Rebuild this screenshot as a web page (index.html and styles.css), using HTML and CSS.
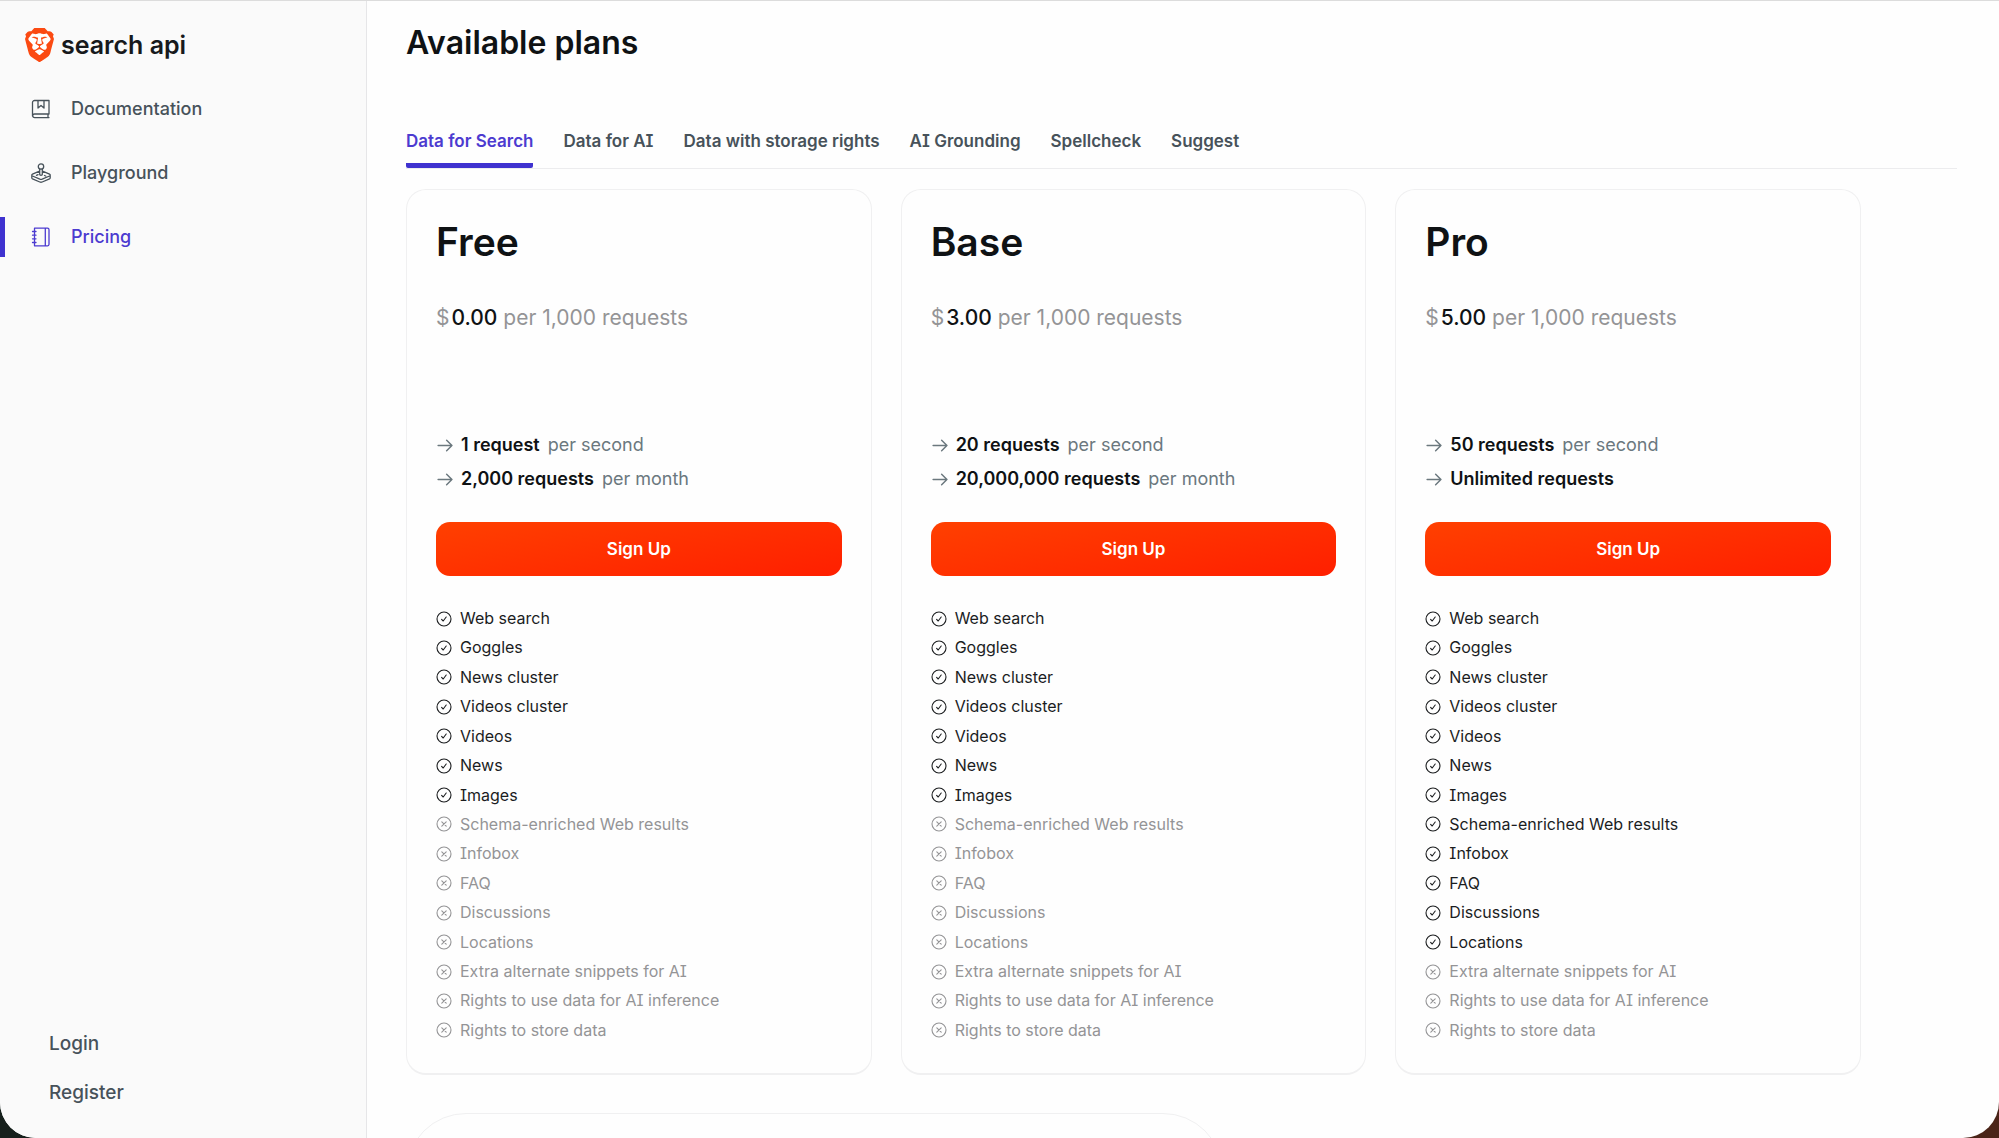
FILE: index.html
```html
<!DOCTYPE html>
<html lang="en">
<head>
    <meta charset="UTF-8">
    <meta name="viewport" content="width=device-width, initial-scale=1.0">
    <title>Search API - Available plans</title>
    <link rel="stylesheet" href="styles.css">
</head>
<body>
    <svg class="sprite" aria-hidden="true">
        <symbol id="check" viewBox="0 0 16 16">
            <circle cx="8" cy="8" r="7" />
            <path d="M5.6 8.4l1.6 1.6 3-4" />
        </symbol>
        <symbol id="cross" viewBox="0 0 16 16">
            <circle cx="8" cy="8" r="7" />
            <path d="M5.8 5.8l4.4 4.4M10.2 5.8l-4.4 4.4" />
        </symbol>
        <symbol id="arrow" viewBox="0 0 16 16">
            <path d="M2 8h13M10 3l5 5-5 5" />
        </symbol>
    </svg>

    <div class="window">
        <aside class="sidebar">
            <a href="#" class="logo">
                <svg class="logo-mark" viewBox="1.9 0 20.2 24" aria-hidden="true">
                    <path fill="#fff" d="M6 3h12l3 5-4 9-5 4-5-4-4-9z" />
                    <path fill="#fb4a12" d="M15.68 0l2.096 2.38s1.84-.512 2.709.358c.868.87 1.584 1.638 1.584 1.638l-.562 1.381.715 2.047s-2.104 7.98-2.35 8.955c-.486 1.919-.818 2.66-2.198 3.633-1.38.972-3.884 2.66-4.293 2.916-.409.256-.92.692-1.38.692-.46 0-.97-.436-1.38-.692a185.796 185.796 0 01-4.293-2.916c-1.38-.973-1.712-1.714-2.197-3.633-.247-.975-2.351-8.955-2.351-8.955l.715-2.047-.562-1.381s.716-.768 1.585-1.638c.868-.87 2.708-.358 2.708-.358L8.321 0h7.36zm-3.679 14.936c-.14 0-1.038.317-1.758.69-.72.373-1.242.637-1.409.742-.167.104-.065.301.087.409.152.107 2.194 1.69 2.393 1.866.198.175.489.464.687.464.198 0 .49-.29.688-.464.198-.175 2.24-1.759 2.392-1.866.152-.108.254-.305.087-.41-.167-.104-.689-.368-1.41-.741-.72-.373-1.617-.69-1.757-.69zm0-11.278s-.409.001-1.022.206-1.278.46-1.584.46c-.307 0-2.581-.434-2.581-.434S4.119 7.152 4.119 7.849c0 .697.339.881.68 1.243l2.02 2.149c.192.203.59.511.356 1.066-.235.555-.58 1.26-.196 1.977.384.716 1.042 1.194 1.464 1.115.421-.08 1.412-.598 1.776-.834.364-.237 1.518-1.19 1.518-1.554 0-.365-1.193-1.02-1.413-1.168-.22-.15-1.226-.725-1.247-.95-.02-.227-.012-.293.284-.851.297-.559.831-1.304.742-1.8-.089-.495-.95-.753-1.565-.986-.615-.232-1.799-.671-1.947-.74-.148-.068-.11-.133.339-.175.448-.043 1.719-.212 2.292-.052.573.16 1.552.403 1.632.532.079.13.149.134.067.579-.081.445-.5 2.581-.541 2.96-.04.38-.12.63.288.724.409.094 1.097.256 1.333.256s.924-.162 1.333-.256c.408-.093.329-.344.288-.723-.04-.38-.46-2.516-.541-2.961-.082-.445-.012-.45.067-.579.08-.129 1.059-.372 1.632-.532.573-.16 1.845.009 2.292.052.449.042.487.107.339.175-.148.069-1.332.508-1.947.74-.615.233-1.476.49-1.565.986-.09.496.445 1.241.742 1.8.297.558.304.624.284.85-.02.226-1.026.802-1.247.95-.22.15-1.413.804-1.413 1.169 0 .364 1.154 1.317 1.518 1.554.364.236 1.355.755 1.776.834.422.079 1.08-.4 1.464-1.115.384-.716.039-1.422-.195-1.977-.235-.555.163-.863.355-1.066l2.02-2.149c.341-.362.68-.546.68-1.243 0-.697-2.695-3.96-2.695-3.96s-2.274.436-2.58.436c-.307 0-.972-.256-1.585-.461-.613-.205-1.022-.206-1.022-.206z" />
                </svg>
                <span>search api</span>
            </a>
            <nav class="menu">
                <a href="#">
                    <svg class="menu-icon" viewBox="0 0 20 20" aria-hidden="true">
                        <path d="M18 15V1.500H3.500a2 2 0 0 0-2 2V17M18 15H3.500a1.800 1.800 0 0 0 0 3.600H18M17 15v3.600M7 1.500v7.500l3-2.500 3 2.500V1.500" />
                    </svg>
                    Documentation
                </a>
                <a href="#">
                    <svg class="menu-icon" viewBox="0 0 20 20" aria-hidden="true">
                        <circle cx="10" cy="3.500" r="2.700" />
                        <path d="M8.700 6v5.500c0 1 2.600 1 2.600 0V6M8.500 8.200L1.500 11.200c-1 .5-1 1.300 0 1.800l7.300 3.200c.8.300 1.600.3 2.400 0l7.300-3.200c1-.5 1-1.300 0-1.800l-7-3M.8 12.500v2.300c0 .5.300.8.700 1l7.300 3.200c.8.300 1.600.3 2.400 0l7.300-3.200c.4-.2.700-.5.700-1v-2.300M5.500 12.300l1.500-.7M13.500 12.500l1.200.5" />
                    </svg>
                    Playground
                </a>
                <a href="#" class="active">
                    <svg class="menu-icon" viewBox="0 0 20 20" aria-hidden="true">
                        <path d="M3.500 1.200h13a1.500 1.500 0 0 1 1.500 1.500v14.600a1.500 1.500 0 0 1-1.500 1.500h-13zM14.300 1.200v17.600M1.500 4.500h3.500M1.500 8.200h3.500M1.500 11.800h3.500M1.500 15.500h3.500" />
                    </svg>
                    Pricing
                </a>
            </nav>
            <div class="account">
                <a href="#">Login</a>
                <a href="#">Register</a>
            </div>
        </aside>

        <main class="content">
            <h1>Available plans</h1>
            <div class="tabs" role="tablist">
                <button class="tab active" role="tab" aria-selected="true">Data for Search</button>
                <button class="tab" role="tab">Data for AI</button>
                <button class="tab" role="tab">Data with storage rights</button>
                <button class="tab" role="tab">AI Grounding</button>
                <button class="tab" role="tab">Spellcheck</button>
                <button class="tab" role="tab">Suggest</button>
            </div>

            <div class="plans">
                <section class="card">
                    <h2>Free</h2>
                    <p class="price"><span>$</span><strong>0.00</strong> per 1,000 requests</p>
                    <ul class="limits">
                        <li><svg><use href="#arrow" /></svg><strong>1 request</strong> per second</li>
                        <li><svg><use href="#arrow" /></svg><strong>2,000 requests</strong> per month</li>
                    </ul>
                    <button class="signup">Sign Up</button>
                    <ul class="features">
                        <li><svg><use href="#check" /></svg>Web search</li>
                        <li><svg><use href="#check" /></svg>Goggles</li>
                        <li><svg><use href="#check" /></svg>News cluster</li>
                        <li><svg><use href="#check" /></svg>Videos cluster</li>
                        <li><svg><use href="#check" /></svg>Videos</li>
                        <li><svg><use href="#check" /></svg>News</li>
                        <li><svg><use href="#check" /></svg>Images</li>
                        <li class="off"><svg><use href="#cross" /></svg>Schema-enriched Web results</li>
                        <li class="off"><svg><use href="#cross" /></svg>Infobox</li>
                        <li class="off"><svg><use href="#cross" /></svg>FAQ</li>
                        <li class="off"><svg><use href="#cross" /></svg>Discussions</li>
                        <li class="off"><svg><use href="#cross" /></svg>Locations</li>
                        <li class="off"><svg><use href="#cross" /></svg>Extra alternate snippets for AI</li>
                        <li class="off"><svg><use href="#cross" /></svg>Rights to use data for AI inference</li>
                        <li class="off"><svg><use href="#cross" /></svg>Rights to store data</li>
                    </ul>
                </section>

                <section class="card">
                    <h2>Base</h2>
                    <p class="price"><span>$</span><strong>3.00</strong> per 1,000 requests</p>
                    <ul class="limits">
                        <li><svg><use href="#arrow" /></svg><strong>20 requests</strong> per second</li>
                        <li><svg><use href="#arrow" /></svg><strong>20,000,000 requests</strong> per month</li>
                    </ul>
                    <button class="signup">Sign Up</button>
                    <ul class="features">
                        <li><svg><use href="#check" /></svg>Web search</li>
                        <li><svg><use href="#check" /></svg>Goggles</li>
                        <li><svg><use href="#check" /></svg>News cluster</li>
                        <li><svg><use href="#check" /></svg>Videos cluster</li>
                        <li><svg><use href="#check" /></svg>Videos</li>
                        <li><svg><use href="#check" /></svg>News</li>
                        <li><svg><use href="#check" /></svg>Images</li>
                        <li class="off"><svg><use href="#cross" /></svg>Schema-enriched Web results</li>
                        <li class="off"><svg><use href="#cross" /></svg>Infobox</li>
                        <li class="off"><svg><use href="#cross" /></svg>FAQ</li>
                        <li class="off"><svg><use href="#cross" /></svg>Discussions</li>
                        <li class="off"><svg><use href="#cross" /></svg>Locations</li>
                        <li class="off"><svg><use href="#cross" /></svg>Extra alternate snippets for AI</li>
                        <li class="off"><svg><use href="#cross" /></svg>Rights to use data for AI inference</li>
                        <li class="off"><svg><use href="#cross" /></svg>Rights to store data</li>
                    </ul>
                </section>

                <section class="card">
                    <h2>Pro</h2>
                    <p class="price"><span>$</span><strong>5.00</strong> per 1,000 requests</p>
                    <ul class="limits">
                        <li><svg><use href="#arrow" /></svg><strong>50 requests</strong> per second</li>
                        <li><svg><use href="#arrow" /></svg><strong>Unlimited requests</strong></li>
                    </ul>
                    <button class="signup">Sign Up</button>
                    <ul class="features">
                        <li><svg><use href="#check" /></svg>Web search</li>
                        <li><svg><use href="#check" /></svg>Goggles</li>
                        <li><svg><use href="#check" /></svg>News cluster</li>
                        <li><svg><use href="#check" /></svg>Videos cluster</li>
                        <li><svg><use href="#check" /></svg>Videos</li>
                        <li><svg><use href="#check" /></svg>News</li>
                        <li><svg><use href="#check" /></svg>Images</li>
                        <li><svg><use href="#check" /></svg>Schema-enriched Web results</li>
                        <li><svg><use href="#check" /></svg>Infobox</li>
                        <li><svg><use href="#check" /></svg>FAQ</li>
                        <li><svg><use href="#check" /></svg>Discussions</li>
                        <li><svg><use href="#check" /></svg>Locations</li>
                        <li class="off"><svg><use href="#cross" /></svg>Extra alternate snippets for AI</li>
                        <li class="off"><svg><use href="#cross" /></svg>Rights to use data for AI inference</li>
                        <li class="off"><svg><use href="#cross" /></svg>Rights to store data</li>
                    </ul>
                </section>
            </div>

            <section class="next-panel"></section>
        </main>
    </div>
</body>
</html>
```
FILE: styles.css
```css
* {
    box-sizing: border-box;
}
body {
    margin: 0;
    background: linear-gradient(to right, #16201c, #4a2418);
    font-family: Inter, sans-serif;
    color: #0f1214;
}
h1, h2, p, ul {
    margin: 0;
    padding: 0;
}
ul {
    list-style: none;
}
a {
    color: inherit;
    text-decoration: none;
}
button {
    padding: 0;
    font-family: inherit;
    border: 0;
    cursor: pointer;
}
svg {
    flex: none;
    fill: none;
    stroke: currentColor;
    stroke-linecap: round;
    stroke-linejoin: round;
}
.sprite {
    display: none;
}
.window {
    display: flex;
    height: 100vh;
    overflow: hidden;
    border-top: 1px solid #dcdcdc;
    border-radius: 0 0 36px 36px;
    background: #fefefe;
}

/* Sidebar */
.sidebar {
    flex: none;
    display: flex;
    flex-direction: column;
    width: 367px;
    padding: 26px 0;
    border-right: 1px solid #e6e6e8;
    background: #fafafa;
    color: #47525a;
    font-size: 18px;
    font-weight: 500;
}
.logo {
    display: flex;
    align-items: center;
    gap: 7px;
    padding-left: 25px;
    color: #17191c;
    font-size: 25px;
    font-weight: 600;
    line-height: 36px;
}
.logo-mark {
    width: 29px;
    height: 34px;
    stroke: none;
}
.menu {
    display: flex;
    flex-direction: column;
    gap: 24px;
    padding-top: 26px;
}
.menu a {
    display: flex;
    align-items: center;
    gap: 20px;
    padding-left: 26px;
    border-left: 5px solid transparent;
    line-height: 40px;
}
.menu .active {
    color: #4c3bd0;
    border-radius: 0 3px 3px 0;
    border-color: #3f32cf;
}
.menu-icon {
    width: 20px;
    height: 20px;
    stroke-width: 1.3;
}
.account {
    display: flex;
    flex-direction: column;
    gap: 25px;
    margin-top: auto;
    padding: 0 0 7px 49px;
    font-size: 19px;
    line-height: 24px;
}

/* Main column */
.content {
    flex: 1;
    min-width: 0;
    padding: 20px 42px 0 39px;
}
h1 {
    font-size: 32px;
    font-weight: 600;
    line-height: 44px;
}
.tabs {
    display: flex;
    gap: 30px;
    margin-top: 66px;
    border-bottom: 1px solid #ececee;
}
.tab {
    padding-bottom: 12px;
    border-bottom: 5px solid transparent;
    background: none;
    color: #47525a;
    font-size: 17px;
    font-weight: 600;
    line-height: 20px;
    white-space: nowrap;
    font-feature-settings: "cv08";
}
.tab.active {
    color: #4c3bd0;
    border-color: #3f32cf;
    border-radius: 2px;
}
.plans {
    display: grid;
    grid-template-columns: repeat(3, 1fr);
    gap: 29px;
    max-width: 1455px;
    margin-top: 20px;
}
.card {
    display: flex;
    flex-direction: column;
    padding: 28px 29px;
    border: 1px solid #f0f0f1;
    border-bottom-width: 2px;
    border-radius: 20px;
}
h2 {
    font-size: 39px;
    font-weight: 600;
    line-height: 48px;
}
.price {
    margin-top: 37px;
    color: #949496;
    font-size: 21px;
    line-height: 30px;
}
.price span {
    margin-right: 2px;
}
.price strong {
    color: #0f1214;
    font-weight: 500;
}
.limits {
    margin-top: 95px;
    color: #6b787e;
    font-size: 18px;
    line-height: 34px;
}
.limits li {
    display: flex;
    align-items: center;
    gap: 8px;
}
.limits svg {
    width: 17px;
    height: 17px;
    stroke-width: 1.4;
}
.limits strong {
    color: #0f1214;
    font-weight: 600;
}
.signup {
    margin-top: 26px;
    border-radius: 14px;
    background: linear-gradient(170deg, #ff4000, #ff1f00);
    color: #fff;
    font-size: 17px;
    font-weight: 600;
    line-height: 54px;
}
.features {
    display: grid;
    align-content: space-between;
    min-height: 441px;
    margin-top: 28px;
    color: #1b1d1f;
    font-size: 16px;
    line-height: 29px;
    font-feature-settings: "cv08";
}
.features li {
    display: flex;
    align-items: center;
    gap: 8px;
}
.features .off {
    color: #949496;
}
.features svg {
    width: 16px;
    height: 16px;
    stroke-width: 1.1;
}
.next-panel {
    max-width: 817px;
    height: 240px;
    margin-top: 38px;
    border: 1px solid #f0f0f1;
    border-radius: 60px;
}
```
